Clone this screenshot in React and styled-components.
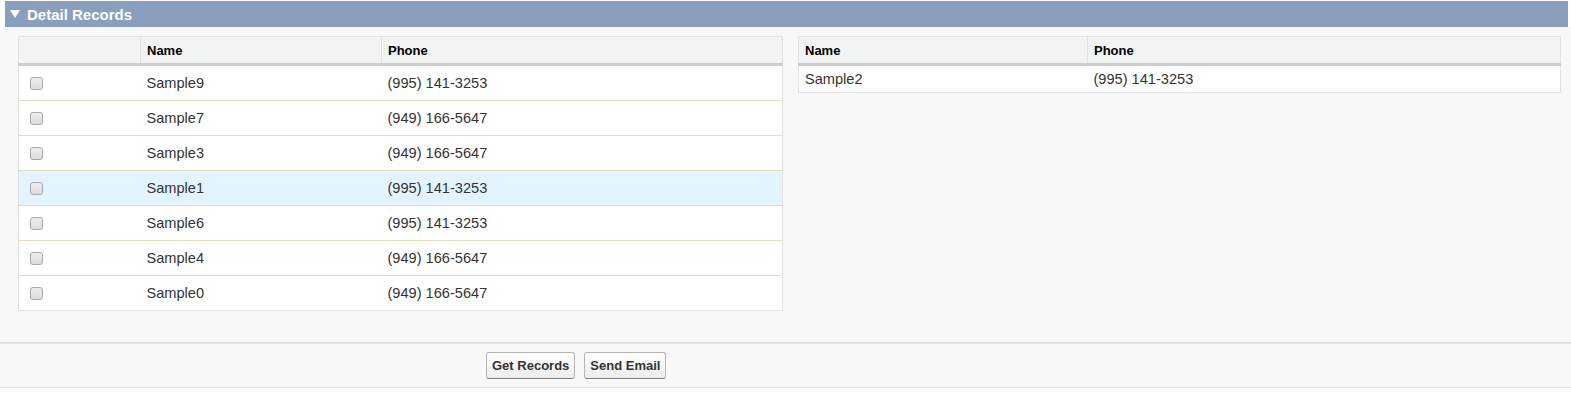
import React from 'react';
import styled, { createGlobalStyle } from 'styled-components';

const GlobalStyle = createGlobalStyle`
  body {
    margin: 0;
    background: #fff;
    font-family: "Liberation Sans", Arial, sans-serif;
  }
`;

const leftRows = [
  { name: 'Sample9', phone: '(995) 141-3253' },
  { name: 'Sample7', phone: '(949) 166-5647' },
  { name: 'Sample3', phone: '(949) 166-5647' },
  { name: 'Sample1', phone: '(995) 141-3253', hover: true },
  { name: 'Sample6', phone: '(995) 141-3253' },
  { name: 'Sample4', phone: '(949) 166-5647' },
  { name: 'Sample0', phone: '(949) 166-5647' },
];

const rightRows = [{ name: 'Sample2', phone: '(995) 141-3253' }];

const Page = styled.div`
  padding-top: 1px;
  background: #fff;
`;

const TitleBar = styled.div`
  margin: 0 3px 0 5px;
  height: 26px;
  display: flex;
  align-items: center;
  gap: 7px;
  padding-left: 5px;
  background: #8a9ebe;
  color: #fff;
  font-size: 15px;
  font-weight: bold;
`;

const Body = styled.div`
  background: #f8f8f8;
  display: flex;
  align-items: flex-start;
  gap: 15px;
  padding: 9px 10px 31px 18px;
`;

const Table = styled.table`
  flex-shrink: 0;
  width: ${p => p.width}px;
  border-collapse: collapse;
  border: 1px solid #e0e3e5;
  background: #fff;
  font-size: 14.6px;
  color: #333;
`;

const HeadCell = styled.th`
  width: ${p => (p.width ? `${p.width}px` : 'auto')};
  height: 28px;
  padding: 0 6px;
  text-align: left;
  font-size: 13px;
  font-weight: bold;
  color: #000;
  background: #f2f3f3;
  border-right: 1px solid #e0e3e5;
  border-bottom: 3px solid #cccccc;
  box-sizing: border-box;
`;

const Row = styled.tr`
  background: ${p => (p.hover ? '#e3f3ff' : '#fff')};
`;

const Cell = styled.td`
  height: ${p => (p.compact ? 26 : 34)}px;
  padding: 0 6px;
  border-bottom: ${p => (p.last ? 'none' : '1px solid #e3deb8')};
  vertical-align: middle;
`;

const CheckCell = styled(Cell)`
  padding: 0 0 0 11px;
`;

const Checkbox = styled.span`
  display: block;
  width: 13px;
  height: 13px;
  box-sizing: border-box;
  border: 1px solid #a9a9a9;
  border-radius: 3px;
  background: linear-gradient(#ededed, #dcdcdc);
`;

const Footer = styled.div`
  display: flex;
  align-items: center;
  gap: 9px;
  height: 43px;
  padding-left: 486px;
  background: #f8f8f8;
  border-top: 2px solid #e0e0e0;
  border-bottom: 1px solid #e3e3e3;
`;

const Button = styled.button`
  height: 27px;
  padding: 0 5px;
  font-family: "Liberation Sans", Arial, sans-serif;
  font-size: 13px;
  font-weight: bold;
  color: #333;
  border: 1px solid #b5b5b5;
  border-bottom-color: #7f7f7f;
  border-radius: 3px;
  background: linear-gradient(#fff, #ededed);
`;

const Caret = () => (
  <svg width="10" height="8" viewBox="0 0 10 8">
    <path d="M0 0 L10 0 L5 8 Z" fill="#fff" />
  </svg>
);

const App = () => (
  <Page>
    <GlobalStyle />
    <TitleBar>
      <Caret />
      Detail Records
    </TitleBar>
    <Body>
      <Table width={765}>
        <thead>
          <tr>
            <HeadCell width={122} />
            <HeadCell width={241}>Name</HeadCell>
            <HeadCell>Phone</HeadCell>
          </tr>
        </thead>
        <tbody>
          {leftRows.map((r, i) => (
            <Row key={r.name} hover={r.hover}>
              <CheckCell last={i === leftRows.length - 1}>
                <Checkbox />
              </CheckCell>
              <Cell last={i === leftRows.length - 1}>{r.name}</Cell>
              <Cell last={i === leftRows.length - 1}>{r.phone}</Cell>
            </Row>
          ))}
        </tbody>
      </Table>
      <Table width={763}>
        <thead>
          <tr>
            <HeadCell width={289}>Name</HeadCell>
            <HeadCell>Phone</HeadCell>
          </tr>
        </thead>
        <tbody>
          {rightRows.map(r => (
            <Row key={r.name}>
              <Cell last compact>{r.name}</Cell>
              <Cell last compact>{r.phone}</Cell>
            </Row>
          ))}
        </tbody>
      </Table>
    </Body>
    <Footer>
      <Button>Get Records</Button>
      <Button>Send Email</Button>
    </Footer>
  </Page>
);

export default App;
